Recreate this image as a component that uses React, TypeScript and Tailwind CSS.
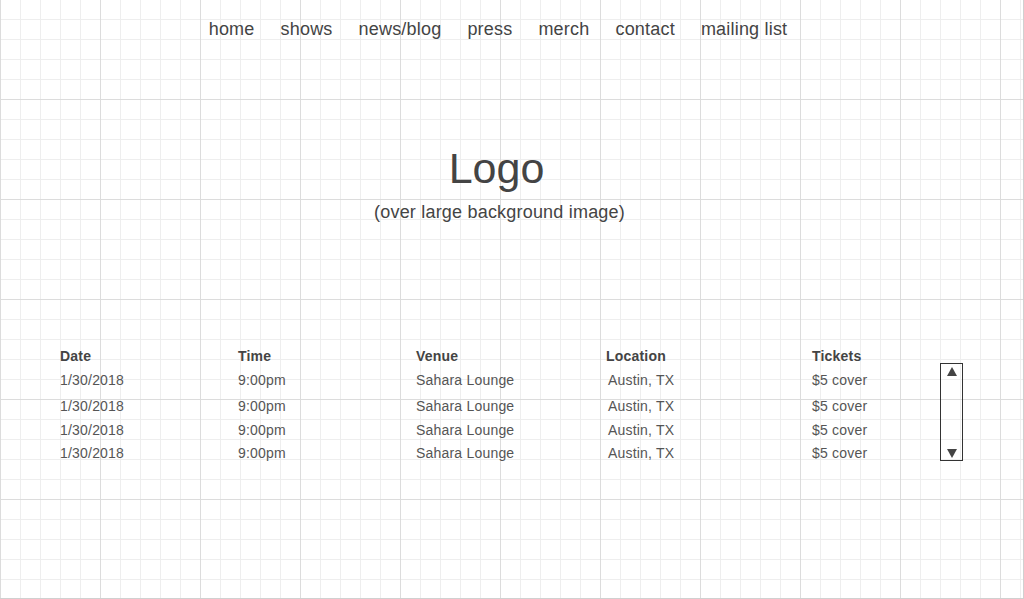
import React from 'react';

const links = ['home', 'shows', 'news/blog', 'press', 'merch', 'contact', 'mailing list'];

// row heights follow the reference's uneven spacing
const shows = [
  { date: '1/30/2018', time: '9:00pm', venue: 'Sahara Lounge', place: 'Austin, TX', tickets: '$5 cover', h: 'h-[26px]' },
  { date: '1/30/2018', time: '9:00pm', venue: 'Sahara Lounge', place: 'Austin, TX', tickets: '$5 cover', h: 'h-[24px]' },
  { date: '1/30/2018', time: '9:00pm', venue: 'Sahara Lounge', place: 'Austin, TX', tickets: '$5 cover', h: 'h-[23px]' },
  { date: '1/30/2018', time: '9:00pm', venue: 'Sahara Lounge', place: 'Austin, TX', tickets: '$5 cover', h: 'h-[23px]' },
];

const cols = 'grid grid-cols-[178px_178px_190px_206px_128px]';

export default function App() {
  return (
    <div className="min-h-screen w-full border-r border-b border-[#d0d0d0] bg-white bg-[linear-gradient(to_right,#dcdcdc_1px,transparent_1px),linear-gradient(to_bottom,#dcdcdc_1px,transparent_1px),linear-gradient(to_right,#eeeeee_1px,transparent_1px),linear-gradient(to_bottom,#eeeeee_1px,transparent_1px)] bg-[size:100px_100px,100px_100px,20px_20px,20px_20px] bg-[position:0_-1px] font-['Liberation_Sans',Arial,sans-serif] text-[#444]">
      <nav className="flex justify-center gap-[26px] pt-[19px] pr-[27px] text-[18px] leading-[21px] tracking-[0.2px]">
        {links.map((l) => (
          <a key={l} href="#" className="text-[#444]">
            {l}
          </a>
        ))}
      </nav>

      <header className="mt-[104px] flex flex-col items-center pr-[26px]">
        <h1 className="mr-[4px] text-[43px] leading-[48px] text-[#444]">Logo</h1>
        <p className="mt-[10px] ml-[2px] text-[18px] leading-[21px] tracking-[0.2px] text-[#444]">(over large background image)</p>
      </header>

      <section className="mt-[125px] ml-[60px] flex items-start">
        <div className="text-[14px] leading-[16px] tracking-[0.2px]">
          <div className={`${cols} h-[24px] font-bold text-[#444]`}>
            <span>Date</span>
            <span>Time</span>
            <span>Venue</span>
            <span>Location</span>
            <span>Tickets</span>
          </div>
          {shows.map((s, i) => (
            <div key={i} className={`${cols} ${s.h} text-[#555]`}>
              <span>{s.date}</span>
              <span>{s.time}</span>
              <span>{s.venue}</span>
              <span className="pl-[2px]">{s.place}</span>
              <span>{s.tickets}</span>
            </div>
          ))}
        </div>

        <div className="mt-[15px] flex h-[98px] w-[23px] flex-col items-center justify-between border border-[#333] pt-[3px] pb-[2px]">
          <svg width="10" height="9" viewBox="0 0 10 9">
            <polygon points="5,0 10,9 0,9" fill="#444" />
          </svg>
          <svg width="10" height="9" viewBox="0 0 10 9">
            <polygon points="0,0 10,0 5,9" fill="#444" />
          </svg>
        </div>
      </section>
    </div>
  );
}
